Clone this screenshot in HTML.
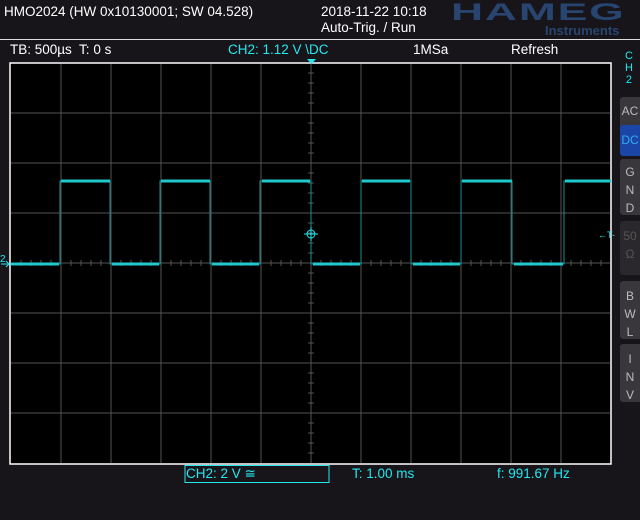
<!DOCTYPE html><html><head><style>
body{margin:0;width:640px;height:520px;background:#18151a;overflow:hidden;font-family:"Liberation Sans","DejaVu Sans",sans-serif;position:relative;color:#fff}
.t{position:absolute;font-size:13.5px;white-space:nowrap}
.c{color:#22e8f0}
.btn{position:absolute;left:620px;width:20px;background:#3a373c;border-radius:3px 0 0 3px;color:#bbb;font-size:12px;text-align:center;line-height:18px}
</style></head><body>
<div class="t" style="left:4px;top:4px">HMO2024 (HW 0x10130001; SW 04.528)</div>
<div class="t" style="left:321px;top:4px">2018-11-22 10:18</div>
<div class="t" style="left:321px;top:20px">Auto-Trig. / Run</div>
<div class="t" style="left:451px;top:0px;font-size:24px;line-height:26px;font-weight:bold;color:#27456f;letter-spacing:1px;transform:scaleX(1.85);transform-origin:left">HAMEG</div>
<div class="t" style="left:545px;top:23px;font-size:13px;font-weight:bold;color:#27456f">Instruments</div>
<div style="position:absolute;left:0;top:39px;width:640px;height:1px;background:#ddd"></div>
<div class="t" style="left:10px;top:42px">TB: 500µs&nbsp; T: 0 s</div>
<div class="t c" style="left:228px;top:42px">CH2: 1.12 V \DC</div>
<div class="t" style="left:413px;top:42px">1MSa</div>
<div class="t" style="left:511px;top:42px">Refresh</div>
<div class="t c" style="left:625px;top:50px;font-size:11px;line-height:12px;text-align:center">C<br>H<br>2</div>
<div class="btn" style="top:97px;height:36px;line-height:28px">AC</div>
<div class="btn" style="top:125px;height:31px;line-height:31px;background:#1b46a8;color:#3ae">DC</div>
<div class="btn" style="top:159px;padding-top:4px;height:52px">G<br>N<br>D</div>
<div class="btn" style="top:221px;background:#2a282c;color:#555;padding-top:6px;height:48px">50<br>Ω</div>
<div class="btn" style="top:281px;padding-top:6px;height:52px">B<br>W<br>L</div>
<div class="btn" style="top:344px;padding-top:6px;height:52px">I<br>N<br>V</div>
<svg width="640" height="520" style="position:absolute;left:0;top:0">
<rect x="10" y="63" width="601" height="401" fill="#000" stroke="#fff" stroke-width="1.5"/>
<g stroke="#555" stroke-width="1">
<path d="M61 64V463M111 64V463M161 64V463M211 64V463M261 64V463M311 64V463M361 64V463M411 64V463M461 64V463M511 64V463M561 64V463"/>
<path d="M11 113H610M11 163H610M11 213H610M11 263H610M11 313H610M11 363H610M11 413H610"/>
</g>
<g stroke="#555">
<path d="M21 260v6M31 260v6M41 260v6M51 260v6M71 260v6M81 260v6M91 260v6M101 260v6M121 260v6M131 260v6M141 260v6M151 260v6M171 260v6M181 260v6M191 260v6M201 260v6M221 260v6M231 260v6M241 260v6M251 260v6M271 260v6M281 260v6M291 260v6M301 260v6M321 260v6M331 260v6M341 260v6M351 260v6M371 260v6M381 260v6M391 260v6M401 260v6M421 260v6M431 260v6M441 260v6M451 260v6M471 260v6M481 260v6M491 260v6M501 260v6M521 260v6M531 260v6M541 260v6M551 260v6M571 260v6M581 260v6M591 260v6M601 260v6"/>
<path d="M308 73h6M308 83h6M308 93h6M308 103h6M308 123h6M308 133h6M308 143h6M308 153h6M308 173h6M308 183h6M308 193h6M308 203h6M308 223h6M308 233h6M308 243h6M308 253h6M308 273h6M308 283h6M308 293h6M308 303h6M308 323h6M308 333h6M308 343h6M308 353h6M308 373h6M308 383h6M308 393h6M308 403h6M308 423h6M308 433h6M308 443h6M308 453h6"/>
</g>
<g fill="none" stroke="#1fc8cc">
<path d="M11 264H60V181H110V264H160V181H210V264H260V181H311V264H361V181H411V264H461V181H512V264H564V181H611" stroke-width="1" stroke="#1a8f94"/>
<path d="M11 264H59M61 181H110M112 264H159M161 181H210M212 264H259M262 181H310M313 264H360M362 181H410M413 264H460M462 181H512M514 264H563M565 181H611" stroke-width="3"/>
</g>
<g stroke="#22e8f0" fill="none"><circle cx="311" cy="234" r="4"/><path d="M304 234h14M311 227v14"/></g>
<path d="M307 59h9l-4.5 5z" fill="#22e8f0"/>
<text x="0" y="262" fill="#22e8f0" font-size="10" font-family="Liberation Sans">2</text>
<path d="M1 264h8M6 261l3 3-3 3" stroke="#22e8f0" fill="none"/>
<text x="598" y="238" fill="#22e8f0" font-size="9" font-family="Liberation Sans">←T-</text>
<rect x="185" y="465.5" width="144" height="17" fill="none" stroke="#22e8f0"/>
</svg>
<div class="t c" style="left:186px;top:466px">CH2: 2 V ≅</div>
<div class="t c" style="left:352px;top:466px">T: 1.00 ms</div>
<div class="t c" style="left:497px;top:466px">f: 991.67 Hz</div>
</body></html>
